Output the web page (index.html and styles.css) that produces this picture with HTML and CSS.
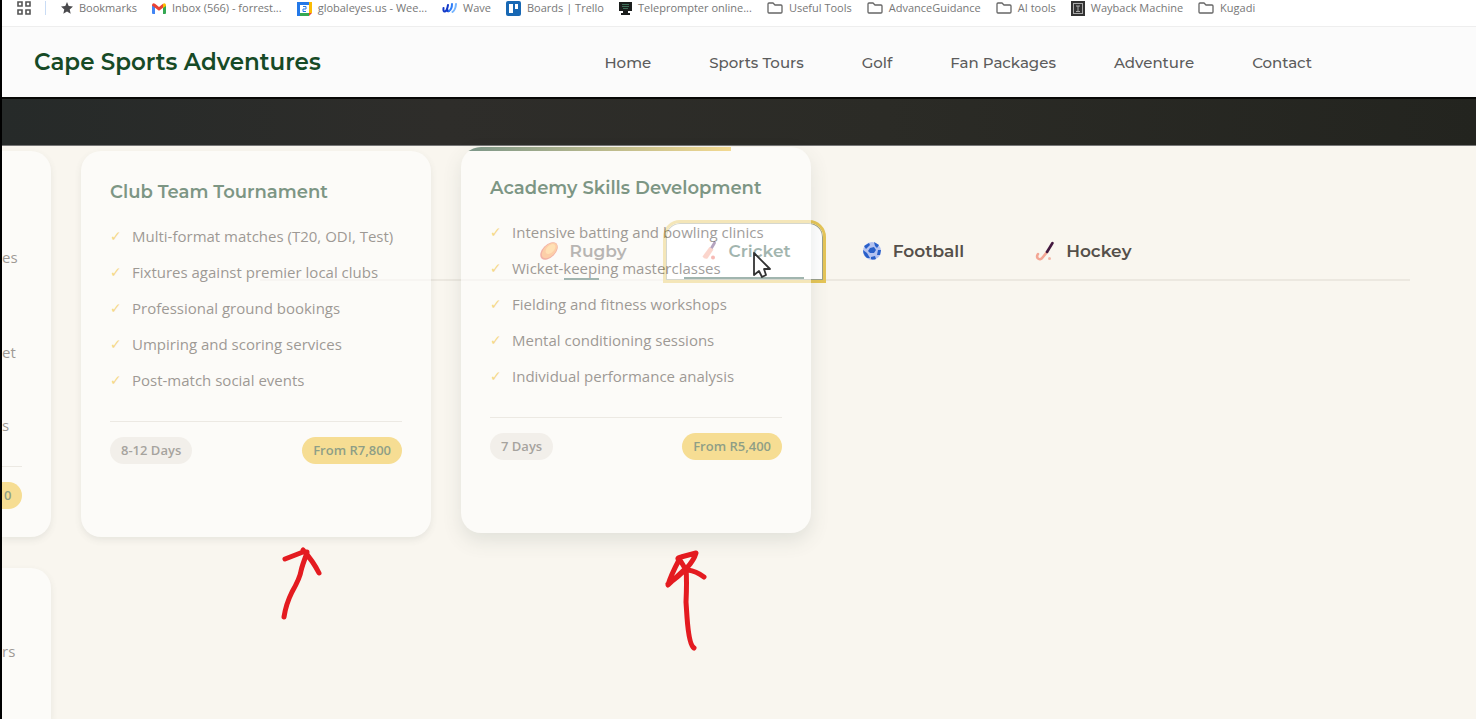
FILE: index.html
```html
<!DOCTYPE html>
<html lang="en">
<head>
<meta charset="utf-8">
<title>Cape Sports Adventures</title>
<link rel="stylesheet" href="styles.css">
</head>
<body>
<nav class="bookmarks" aria-label="Bookmarks">
  <button type="button" class="apps" aria-label="Apps"><svg width="14" height="14" viewBox="0 0 14 14" fill="none" stroke="#555" stroke-width="1.6"><path d="M1 1h4v4H1zM9 1h4v4H9zM1 9h4v4H1zM9 9h4v4H9z"/></svg></button>
  <a class="bm" href="#"><svg width="12" height="12" viewBox="0 0 12 12"><path fill="#4a4a4d" d="M6 0l1.7 4.1 4.3.4-3.300 2.900 1 4.300L6 9.400l-3.700 2.300 1-4.300L0 4.500l4.300-.4z"/></svg>Bookmarks</a>
  <a class="bm" href="#"><svg width="14" height="11" viewBox="0 0 14 11"><path fill="#4285f4" d="M0 2h3v9H1q-1 0-1-1z"/><path fill="#34a853" d="M11 3h3v7q0 1-1 1h-2z"/><path fill="#ea4335" d="M0 2Q.5-.5 3 .7l4 3.200 4-3.200v4L7 7.700 0 2.500z"/><path fill="#fbbc04" d="M11 .7Q13.500-.5 14 2v1l-3 2z"/></svg>Inbox (566) - forrest...</a>
  <a class="bm" href="#"><svg width="15" height="15" viewBox="0 0 15 15"><path fill="#2378e8" d="M0 1h12v14H0z"/><path fill="#fbbc04" d="M12 1h3v11h-3z"/><path fill="#34a853" d="M3 12h9v3H3z"/><path fill="#ea4335" d="M12 12h3l-3 3z"/><path fill="#fff" d="M3 4h9v8H3z"/><path fill="none" stroke="#2378e8" d="M6 5.500h3v2.500H6v2.500h3"/></svg>globaleyes.us - Wee...</a>
  <a class="bm" href="#"><svg width="15" height="12" viewBox="0 0 15 12" fill="none" stroke-linecap="round" stroke-width="2"><path stroke="#1238c8" d="M1.500 6q-.5 4 1.500 3.500T6 3M5.500 8q0 2 1.500 1"/><path stroke="#2d7df7" d="M7 9q3-2 3-7"/><path stroke="#75b5ff" d="M10.500 10q3-2 3.500-8"/></svg>Wave</a>
  <a class="bm" href="#"><svg width="15" height="15" viewBox="0 0 15 15"><rect width="15" height="15" rx="2" fill="#1868b4"/><path fill="#fff" d="M3 3h4v9H3zM9 3h3v5H9z"/></svg>Boards | Trello</a>
  <a class="bm" href="#"><svg width="13" height="13" viewBox="0 0 13 13"><path fill="#1b1e1d" d="M0 0h13v9H0zM4 9h5v2h2v2H2v-2h2z"/><path fill="#3e6f58" d="M3 2h7v1H3zM3 4h7v1H3zM4 6h5v1H4z"/></svg>Teleprompter online...</a>
  <a class="bm" href="#"><svg class="folder" width="16" height="12" viewBox="0 0 16 12"><path d="M1 2q0-1 1-1h4l2 2h6q1 0 1 1v6q0 1-1 1H2q-1 0-1-1z"/></svg>Useful Tools</a>
  <a class="bm" href="#"><svg class="folder" width="16" height="12" viewBox="0 0 16 12"><path d="M1 2q0-1 1-1h4l2 2h6q1 0 1 1v6q0 1-1 1H2q-1 0-1-1z"/></svg>AdvanceGuidance</a>
  <a class="bm" href="#"><svg class="folder" width="16" height="12" viewBox="0 0 16 12"><path d="M1 2q0-1 1-1h4l2 2h6q1 0 1 1v6q0 1-1 1H2q-1 0-1-1z"/></svg>AI tools</a>
  <a class="bm" href="#"><svg width="14" height="15" viewBox="0 0 14 15"><rect width="14" height="15" fill="#333"/><path stroke="#aaa" fill="none" d="M2.500 3v9M11.500 3v9M2 2.500h10M2 12.500h10M5 5h4M7 5v6M5 10.500h4"/></svg>Wayback Machine</a>
  <a class="bm" href="#"><svg class="folder" width="16" height="12" viewBox="0 0 16 12"><path d="M1 2q0-1 1-1h4l2 2h6q1 0 1 1v6q0 1-1 1H2q-1 0-1-1z"/></svg>Kugadi</a>
</nav>
<header class="header">
  <a class="brand" href="#">Cape Sports Adventures</a>
  <nav class="nav">
    <a href="#">Home</a><a href="#">Sports Tours</a><a href="#">Golf</a><a href="#">Fan Packages</a><a href="#">Adventure</a><a href="#">Contact</a>
  </nav>
</header>
<div class="hero"></div>
<main class="stage">
  <div class="tabs" role="tablist">
    <button type="button" class="tab tab-first" role="tab"><svg width="20" height="20" viewBox="0 0 20 20"><ellipse cx="10" cy="10" rx="10.500" ry="6.500" transform="rotate(-45 10 10)" fill="#e0452c"/><ellipse cx="10.500" cy="9.500" rx="9.500" ry="5.500" transform="rotate(-45 10.500 9.500)" fill="#fa8c30"/><ellipse cx="11.500" cy="8" rx="6" ry="3.500" transform="rotate(-45 11.500 8)" fill="#ffb850"/></svg>Rugby</button>
    <button type="button" class="tab tab-active" role="tab" aria-selected="true"><svg width="20" height="20" viewBox="0 0 20 20"><path d="M16.500 2l-3 5" stroke="#4b2366" stroke-width="2.800" stroke-linecap="round"/><path d="M11.500 6l4 2.500-6 9q-3 1-5-2z" fill="#f79c86"/><circle cx="15" cy="16.500" r="2" fill="#ee5c50"/></svg>Cricket</button>
    <button type="button" class="tab" role="tab"><svg width="20" height="20" viewBox="0 0 20 20"><circle cx="10" cy="10" r="9" fill="#b4c2f0"/><path fill="#285fc9" d="M8 7l4-1 2 3-2 3-4 0-2-2zM2 5l5-3 1 2-4 4zM12 1l5 3-2 3-2-2zM16 9l3 0-1 5-3 0zM1 9l4 3 3 5-3 0q-4-3-4-8zM9 16l4-1 1 3q-3 1-5 0z"/></svg>Football</button>
    <button type="button" class="tab" role="tab"><svg width="20" height="20" viewBox="0 0 20 20" fill="none" stroke-linecap="round"><path d="M12 11l-4 5q-3 4-5.500 1-1-2 .5-4" stroke="#f3a694" stroke-width="2.600"/><path d="M17.500 2L12 11" stroke="#43183f" stroke-width="2.600"/><circle cx="14.500" cy="17.500" r="1.500" fill="#f3b7a8"/></svg>Hockey</button>
  </div>
  <div class="cards">
    <article class="card card-cut">
      <ul class="tail">
        <li class="tail-a">es</li><li class="tail-b">et</li><li>s</li>
      </ul>
      <footer class="foot"><span class="pill price pill-cut">0</span></footer>
    </article>
    <article class="card">
      <h3>Club Team Tournament</h3>
      <ul class="list">
        <li>Multi-format matches (T20, ODI, Test)</li>
        <li>Fixtures against premier local clubs</li>
        <li>Professional ground bookings</li>
        <li>Umpiring and scoring services</li>
        <li>Post-match social events</li>
      </ul>
      <footer class="foot"><span class="pill">8-12 Days</span><span class="pill price">From R7,800</span></footer>
    </article>
    <article class="card card-lifted">
      <h3>Academy Skills Development</h3>
      <ul class="list">
        <li>Intensive batting and bowling clinics</li>
        <li>Wicket-keeping masterclasses</li>
        <li>Fielding and fitness workshops</li>
        <li>Mental conditioning sessions</li>
        <li>Individual performance analysis</li>
      </ul>
      <footer class="foot"><span class="pill">7 Days</span><span class="pill price">From R5,400</span></footer>
    </article>
    <article class="card card-cut card-next">
      <ul class="tail"><li>rs</li></ul>
    </article>
  </div>
</main>
<svg class="marks" width="440" height="110" viewBox="275 542 440 110" fill="none" stroke="#e41b20" stroke-width="5" stroke-linecap="round" stroke-linejoin="round" aria-hidden="true">
  <path d="M284 617q2-13 8-25 8-14 9-21 1-5 6-18M285 559l18-7 4 0M303 550q10 11 16 23"/>
  <path d="M694 648q-5-3-7-31l-1-15q1-20 0-34M686 568l-18 17q3-10 11-25-3-2 2-3l15-4q-4 14-28 31M688 570q8 1 16 7M680 560l6 10"/>
</svg>
<svg class="cursor" width="20" height="29" viewBox="0 0 20 29" aria-hidden="true"><path d="M2 2v22l5-4 3 6 4-2-2-6h6z" fill="#fff" stroke="#333" stroke-width="1.800" stroke-linejoin="round"/></svg>
</body>
</html>
```
FILE: styles.css
```css
* { box-sizing: border-box; }
html { height: 100%; }
body {
  position: relative;
  display: flex;
  flex-direction: column;
  height: 100vh;
  margin: 0;
  overflow: hidden;
  border-left: 2px solid #000;
  background: #f9f6ef;
  color: #444;
  font-family: "Open Sans", "Noto Sans", sans-serif;
}
a { color: inherit; text-decoration: none; }
button { border: 0; background: none; font: inherit; color: inherit; padding: 0; }
ul { list-style: none; margin: 0; padding: 0; }
svg { flex: none; display: block; }

.bookmarks {
  display: flex;
  align-items: center;
  gap: 15px;
  height: 27px;
  flex: none;
  padding: 0 0 10px 15px;
  background: #fff;
  border-bottom: 1px solid #eee;
  font-size: 11px;
  line-height: 16px;
  color: #777;
  white-space: nowrap;
}
.apps { border-right: 1px solid #c9dcf5; padding-right: 14px; }
.bm { display: flex; align-items: center; gap: 6px; }
.folder { fill: none; stroke: #666; stroke-width: 1.3; }

.header {
  display: flex;
  align-items: center;
  justify-content: space-between;
  height: 70px;
  flex: none;
  padding: 0 164px 0 32px;
  background: #fbfbfb;
  font-family: Montserrat, Inter, sans-serif;
}
.brand { font-size: 23px; font-weight: 600; color: #164a26; }
.nav { display: flex; gap: 58px; font-size: 15px; font-weight: 500; color: #5c5c5c; }

.hero {
  height: 49px;
  flex: none;
  background: linear-gradient(90deg, #262a29, #2e2d2a 30%, #2b2b26 60%, #23241f);
  border-top: 2px solid #080806;
  border-bottom: 1px solid #777;
}

.stage { display: grid; flex: 1; min-height: 0; align-items: start; }
.tabs, .cards { grid-area: 1 / 1; }
.tabs {
  display: flex;
  justify-content: center;
  gap: 7px;
  margin: 77px 66px 0 258px;
  border-bottom: 2px solid #ece8e0;
  font-family: Montserrat, Inter, sans-serif;
  font-size: 17px;
  font-weight: 600;
  color: #55504a;
}
.tab {
  display: flex;
  align-items: center;
  gap: 11px;
  height: 57px;
  margin-bottom: -1px;
  padding: 0 32px 2px;
}
.tab-first { background: linear-gradient(#1f5040, #1f5040) 57px 100% / 35px 2px no-repeat; }
.tab-active {
  border-radius: 14px 14px 0 0;
  box-shadow: inset 0 0 0 1px #9ba08c;
  outline: 3px solid #e5c558;
  background: linear-gradient(#1f5040, #1f5040) 50% 100% / 120px 3px no-repeat, #fff;
  color: #1f5040;
}

.cards {
  display: grid;
  align-self: stretch;
  grid-template-columns: 49px 350px 350px;
  grid-template-rows: auto 1fr;
  column-gap: 30px;
  row-gap: 31px;
  padding-top: 5px;
  z-index: 1;
}
.card {
  padding: 29px;
  border-radius: 20px;
  background: #fff;
  box-shadow: 0 3px 6px rgba(40, 60, 50, .14);
  opacity: .58;
}
.card-lifted {
  transform: translateY(-4px);
  background: linear-gradient(90deg, #1f5040, #f0c64e) 0 0 / 270px 4px no-repeat, #fff;
  box-shadow: 0 8px 18px rgba(40, 60, 50, .18);
}
.card h3 {
  margin: 0 0 20px;
  font-family: Montserrat, Inter, sans-serif;
  font-size: 18px;
  font-weight: 600;
  line-height: 24px;
  color: #245238;
  white-space: nowrap;
}
.list { display: flex; flex-direction: column; gap: 12px; }
.list li, .tail li {
  font-size: 15px;
  line-height: 24px;
  color: #5c5754;
  white-space: nowrap;
}
.list li { display: flex; }
.list li::before {
  content: "✓";
  width: 22px;
  font-family: "DejaVu Sans", sans-serif;
  font-size: 14px;
  font-weight: 700;
  color: #f3c440;
}
.foot {
  display: flex;
  justify-content: space-between;
  margin-top: 29px;
  padding-top: 15px;
  border-top: 1px solid #e4e0dc;
}
.pill {
  padding: 0 11px;
  border-radius: 14px;
  background: #eeebe8;
  color: #6b6864;
  font-size: 13px;
  font-weight: 600;
  line-height: 27px;
}
.price { background: #f4cc51; color: #42603c; }

.card-cut { padding: 29px 29px 28px 0; border-radius: 0 20px 20px 0; }
.tail-a { margin: 65px 0 71px; }
.tail-b { margin-bottom: 49px; }
.pill-cut { padding-left: 2px; border-radius: 0 14px 14px 0; }
.card-next { padding: 71px 0 0; border-radius: 0 20px 0 0; }

.marks { position: absolute; left: 273px; top: 542px; z-index: 2; }
.cursor { position: absolute; left: 750px; top: 251px; z-index: 3; }
```
